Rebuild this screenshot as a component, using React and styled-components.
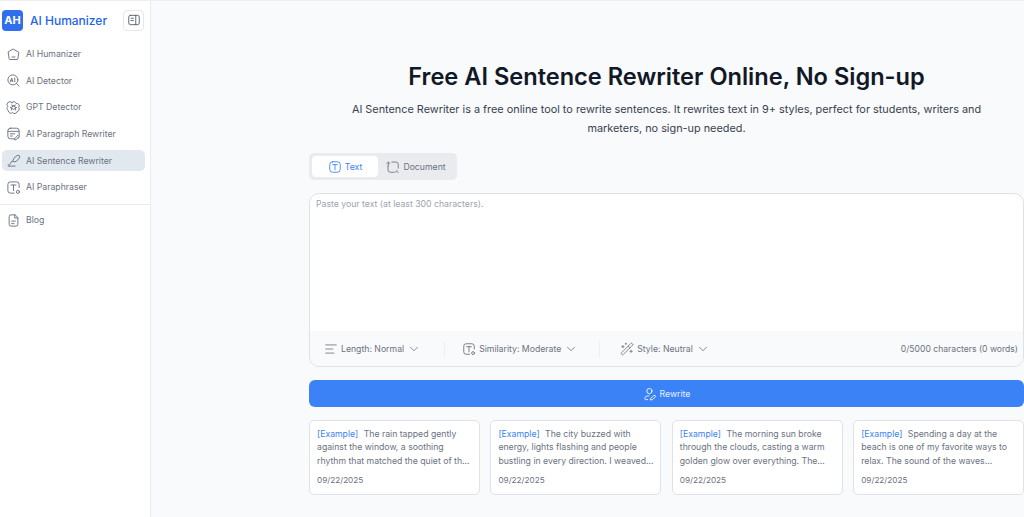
import React from 'react';
import styled, { createGlobalStyle } from 'styled-components';
import { ChevronDown, Wand2, AlignLeft } from 'lucide-react';

const GlobalStyle = createGlobalStyle`
  html, body {
    margin: 0;
    height: 100%;
    overflow: hidden;
    font-family: Inter, "Liberation Sans", sans-serif;
  }
  #root { height: 100%; }
  * { box-sizing: border-box; }
`;

const Page = styled.div`
  display: flex;
  height: 517px;
  border-top: 1px solid #eceef1;
  background: #f9fafb;
`;

const Sidebar = styled.aside`
  width: 151px;
  flex-shrink: 0;
  background: #fff;
  border-right: 1px solid #e9ebef;
  display: flex;
  flex-direction: column;
`;

const Brand = styled.div`
  display: flex;
  align-items: center;
  height: 36px;
  padding: 2px 6px 0 2px;
`;

const LogoBadge = styled.div`
  width: 21px;
  height: 21px;
  border-radius: 4px;
  background: #2f6fed;
  color: #fff;
  font-size: 11px;
  font-weight: 700;
  display: flex;
  align-items: center;
  justify-content: center;
`;

const BrandName = styled.div`
  margin-left: 7px;
  color: #2563eb;
  font-size: 12px;
  font-weight: 500;
  flex: 1;
  white-space: nowrap;
`;

const CollapseButton = styled.div`
  width: 21px;
  height: 21px;
  border: 1px solid #e5e7eb;
  border-radius: 4px;
  display: flex;
  align-items: center;
  justify-content: center;
`;

const Nav = styled.nav`
  display: flex;
  flex-direction: column;
  gap: 5.67px;
  padding: ${p => p.$top}px 5px 6px 2px;
`;

const NavItem = styled.div`
  display: flex;
  align-items: center;
  gap: 5.5px;
  height: 21px;
  padding-left: 3.5px;
  border-radius: 5px;
  background: ${p => (p.$active ? '#e2e8f0' : 'transparent')};
  color: #6b7280;
  font-size: 8.7px;
  white-space: nowrap;
`;

const NavDivider = styled.div`
  height: 1px;
  background: #e9ebef;
`;

const Main = styled.main`
  flex: 1;
  min-width: 0;
  padding: 60px 0 0 158px;
`;

const Title = styled.h1`
  margin: 0;
  text-align: center;
  color: #111827;
  font-size: 23.6px;
  line-height: 32px;
  font-weight: 600;
`;

const Subtitle = styled.p`
  margin: 7px auto 0;
  width: 650px;
  text-align: center;
  color: #374151;
  font-size: 10.87px;
  line-height: 19px;
`;

const Tabs = styled.div`
  display: inline-flex;
  margin-top: 15px;
  padding: 3px;
  height: 27px;
  border-radius: 5px;
  background: #e9ebee;
  vertical-align: top;
`;

const Tab = styled.div`
  display: flex;
  align-items: center;
  justify-content: center;
  gap: 3px;
  width: ${p => (p.$active ? '66px' : '76px')};
  border-radius: 4px;
  background: ${p => (p.$active ? '#fff' : 'transparent')};
  color: ${p => (p.$active ? '#3b82f6' : '#6b7280')};
  font-size: 8.7px;
`;

const Editor = styled.section`
  margin-top: 13px;
  height: 174px;
  border: 1px solid #dde1e8;
  border-radius: 10px;
  background: #fff;
  display: flex;
  flex-direction: column;
  overflow: hidden;
`;

const Placeholder = styled.div`
  flex: 1;
  padding: 4px 6px;
  color: #9ca3af;
  font-size: 8.7px;
  line-height: 13px;
`;

const Toolbar = styled.div`
  height: 35px;
  background: #f9fafb;
  display: flex;
  align-items: center;
  padding: 0 5px 0 14px;
  color: #6b7280;
  font-size: 8.7px;
`;

const Option = styled.div`
  display: flex;
  align-items: center;
  gap: 3px;
  white-space: nowrap;
`;

const ToolDivider = styled.div`
  width: 1px;
  height: 16px;
  margin: 0 ${p => p.$right}px 0 ${p => p.$left}px;
  background: #eceef1;
`;

const Count = styled.div`
  margin-left: auto;
  font-size: 8.6px;
  white-space: nowrap;
`;

const RewriteButton = styled.div`
  margin-top: 13px;
  height: 27px;
  border-radius: 6px;
  background: #3b82f6;
  color: #e8f0fe;
  font-size: 8.7px;
  display: flex;
  align-items: center;
  justify-content: center;
  gap: 3px;
`;

const Examples = styled.div`
  display: grid;
  grid-template-columns: repeat(4, 1fr);
  gap: 10.6px;
  margin-top: 13px;
`;

const Card = styled.article`
  height: 75px;
  padding: 7px 4px 7px 7px;
  border: 1px solid #dfe3e9;
  border-radius: 5px;
  background: #fff;
  color: #6b7280;
  font-size: 8.7px;
  line-height: 13.3px;
`;

const CardText = styled.div`
  height: 40px;
`;

const Tag = styled.span`
  color: #3b82f6;
  margin-right: 3px;
`;

const CardDate = styled.div`
  margin-top: 6px;
  font-size: 8.2px;
`;

const Icon = ({ children, size = 15, color = 'currentColor' }) => (
  <svg width={size} height={size} viewBox="0 0 24 24" fill="none" stroke={color} strokeWidth="1.5" strokeLinecap="round" strokeLinejoin="round" style={{ flexShrink: 0 }}>
    {children}
  </svg>
);

const HomeIcon = () => (
  <Icon>
    <path d="M12 3.500l8.500 5-1.500 10.500a1 1 0 0 1-1 1H6a1 1 0 0 1-1-1L3.500 8.500z" />
    <path d="M9.500 16h5" />
  </Icon>
);

const DetectorIcon = () => (
  <Icon>
    <circle cx="11" cy="11" r="8" />
    <path d="M17 17l4 4" />
    <path d="M7 14l2-6 2 6M7.700 12.500h2.600M14 8v6" />
  </Icon>
);

const GptIcon = () => (
  <Icon>
    <path d="M9.500 4a4 4 0 0 1 6.800 1.500 4 4 0 0 1 4 6.500 4 4 0 0 1-2.600 6.500 4 4 0 0 1-7.200 1.500 4 4 0 0 1-6.800-3 4 4 0 0 1-.7-6.500A4 4 0 0 1 9.500 4z" />
    <path d="M9 8l6 3v5M15 8l-6 3v5M7 12l5 3 5-3" />
  </Icon>
);

const ParagraphIcon = () => (
  <Icon>
    <rect x="3" y="3.500" width="18" height="17" rx="4" />
    <path d="M3 8.500h18M7 12.500h7M7 16h3" />
    <path d="M14 20l5-5 2 2-5 5h-2z" fill="#fff" />
  </Icon>
);

const PenIcon = () => (
  <Icon>
    <path d="M20 3.500c-3.500 0-8 4.500-9 9l2 2c4.500-1 9-5.500 9-9z" />
    <path d="M11 13.500c-3 0-4 2-4 3.500s-2 3-3.500 2M3.500 21h11" />
  </Icon>
);

const TextGearIcon = ({ size, color }) => (
  <Icon size={size} color={color}>
    <path d="M21 12V7a4 4 0 0 0-4-4H7a4 4 0 0 0-4 4v10a4 4 0 0 0 4 4h6" />
    <path d="M8 8h8M12 8v9" />
    <circle cx="19" cy="19" r="2.500" />
  </Icon>
);

const FileIcon = () => (
  <Icon>
    <path d="M14 3H8a3 3 0 0 0-3 3v12a3 3 0 0 0 3 3h8a3 3 0 0 0 3-3V8z" />
    <path d="M14 3v5h5M9 13h6M9 17h4" />
  </Icon>
);

const PanelIcon = () => (
  <Icon size={14} color="#4b5563">
    <rect x="3" y="4" width="18" height="16" rx="3" />
    <path d="M15 4v16M7 9h4M7 13h4" />
  </Icon>
);

const TextBoxIcon = () => (
  <Icon size={14} color="#3b82f6">
    <rect x="3" y="3" width="18" height="18" rx="5" />
    <path d="M8 8h8M12 8v9" />
  </Icon>
);

const DocumentIcon = () => (
  <Icon size={14} color="#6b7280">
    <path d="M10 3.500h7a4 4 0 0 1 4 4V14" />
    <path d="M3.500 10v7a4 4 0 0 0 4 4H14" />
    <path d="M1.500 6l2.500-2.500L6.500 6M4 3.500V10M21 21.500l-2-2M16 21l3-3" />
  </Icon>
);

const RewriteIcon = () => (
  <Icon size={14} color="#fff">
    <circle cx="11" cy="7" r="4.500" />
    <path d="M10 15c-4 0-7 2-7 4.500S5 22 8 21.500" />
    <path d="M13 20l6-6 3 2-6 6h-3z" />
  </Icon>
);

const navItems = [
  { label: 'AI Humanizer', icon: <HomeIcon /> },
  { label: 'AI Detector', icon: <DetectorIcon /> },
  { label: 'GPT Detector', icon: <GptIcon /> },
  { label: 'AI Paragraph Rewriter', icon: <ParagraphIcon /> },
  { label: 'AI Sentence Rewriter', icon: <PenIcon />, active: true },
  { label: 'AI Paraphraser', icon: <TextGearIcon /> },
];

const examples = [
  'The rain tapped gently against the window, a soothing rhythm that matched the quiet of th...',
  'The city buzzed with energy, lights flashing and people bustling in every direction. I weaved...',
  'The morning sun broke through the clouds, casting a warm golden glow over everything. The...',
  'Spending a day at the beach is one of my favorite ways to relax. The sound of the waves...',
];

const App = () => (
  <>
    <GlobalStyle />
    <Page>
      <Sidebar>
        <Brand>
          <LogoBadge>AH</LogoBadge>
          <BrandName>AI Humanizer</BrandName>
          <CollapseButton><PanelIcon /></CollapseButton>
        </Brand>
        <Nav $top={6.5}>
          {navItems.map(item => (
            <NavItem key={item.label} $active={item.active}>
              {item.icon}
              {item.label}
            </NavItem>
          ))}
        </Nav>
        <NavDivider />
        <Nav $top={5}>
          <NavItem><FileIcon />Blog</NavItem>
        </Nav>
      </Sidebar>
      <Main>
        <Title>Free AI Sentence Rewriter Online, No Sign-up</Title>
        <Subtitle>
          AI Sentence Rewriter is a free online tool to rewrite sentences. It rewrites text in 9+ styles, perfect for students, writers and marketers, no sign-up needed.
        </Subtitle>
        <Tabs>
          <Tab $active><TextBoxIcon />Text</Tab>
          <Tab><DocumentIcon />Document</Tab>
        </Tabs>
        <Editor>
          <Placeholder>Paste your text (at least 300 characters).</Placeholder>
          <Toolbar>
            <Option><AlignLeft size={14} strokeWidth={1.4} />Length: Normal <ChevronDown size={14} strokeWidth={1.4} /></Option>
            <ToolDivider $left={23} $right={17} />
            <Option><TextGearIcon size={14} />Similarity: Moderate <ChevronDown size={14} strokeWidth={1.4} /></Option>
            <ToolDivider $left={21} $right={20} />
            <Option><Wand2 size={14} strokeWidth={1.4} />Style: Neutral <ChevronDown size={14} strokeWidth={1.4} /></Option>
            <Count>0/5000 characters (0 words)</Count>
          </Toolbar>
        </Editor>
        <RewriteButton><RewriteIcon />Rewrite</RewriteButton>
        <Examples>
          {examples.map(text => (
            <Card key={text}>
              <CardText><Tag>[Example]</Tag> {text}</CardText>
              <CardDate>09/22/2025</CardDate>
            </Card>
          ))}
        </Examples>
      </Main>
    </Page>
  </>
);

export default App;
